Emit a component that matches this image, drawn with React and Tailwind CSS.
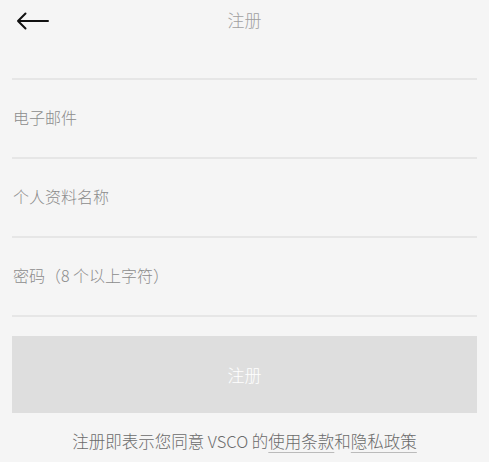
export default function App() {
  return (
    <div className="w-[489px] h-[462px] bg-[#f5f5f5] overflow-hidden font-['Noto_Sans_CJK_SC','Noto_Sans',sans-serif] font-light">
      <div className="px-3">
        <div className="h-[78px] relative">
          <div className="h-[40px] flex items-center justify-center text-[17px] text-[#a0a0a0]">注册</div>
          <svg className="absolute left-[4px] top-[12px]" width="34" height="18" viewBox="0 0 34 18" fill="none">
            <path d="M32 9H2M9.5 1.5L2 9l7.5 7.5" stroke="#111" strokeWidth="2" strokeLinecap="round" strokeLinejoin="round" />
          </svg>
        </div>
        <div className="h-[2px] bg-[#e6e6e6]" />
        <div className="h-[77px] flex items-center pb-[4px] px-[1px] text-[16px] text-[#8c8c8c]">电子邮件</div>
        <div className="h-[2px] bg-[#e6e6e6]" />
        <div className="h-[77px] flex items-center pb-[4px] px-[1px] text-[16px] text-[#8c8c8c]">个人资料名称</div>
        <div className="h-[2px] bg-[#e6e6e6]" />
        <div className="h-[77px] flex items-center pb-[4px] px-[1px] text-[16px] text-[#8c8c8c]">密码（8 个以上字符）</div>
        <div className="h-[2px] bg-[#e6e6e6]" />
        <div className="mt-[19px] h-[77px] bg-[#dedede] flex items-center justify-center text-[17px] text-white">注册</div>
        <div className="mt-[16px] text-center text-[16.5px] text-[#6a6a6a]">
          注册即表示您同意 VSCO 的<span className="underline decoration-[#bbb] underline-offset-4">使用条款</span>和<span className="underline decoration-[#bbb] underline-offset-4">隐私政策</span>
        </div>
      </div>
    </div>
  );
}
